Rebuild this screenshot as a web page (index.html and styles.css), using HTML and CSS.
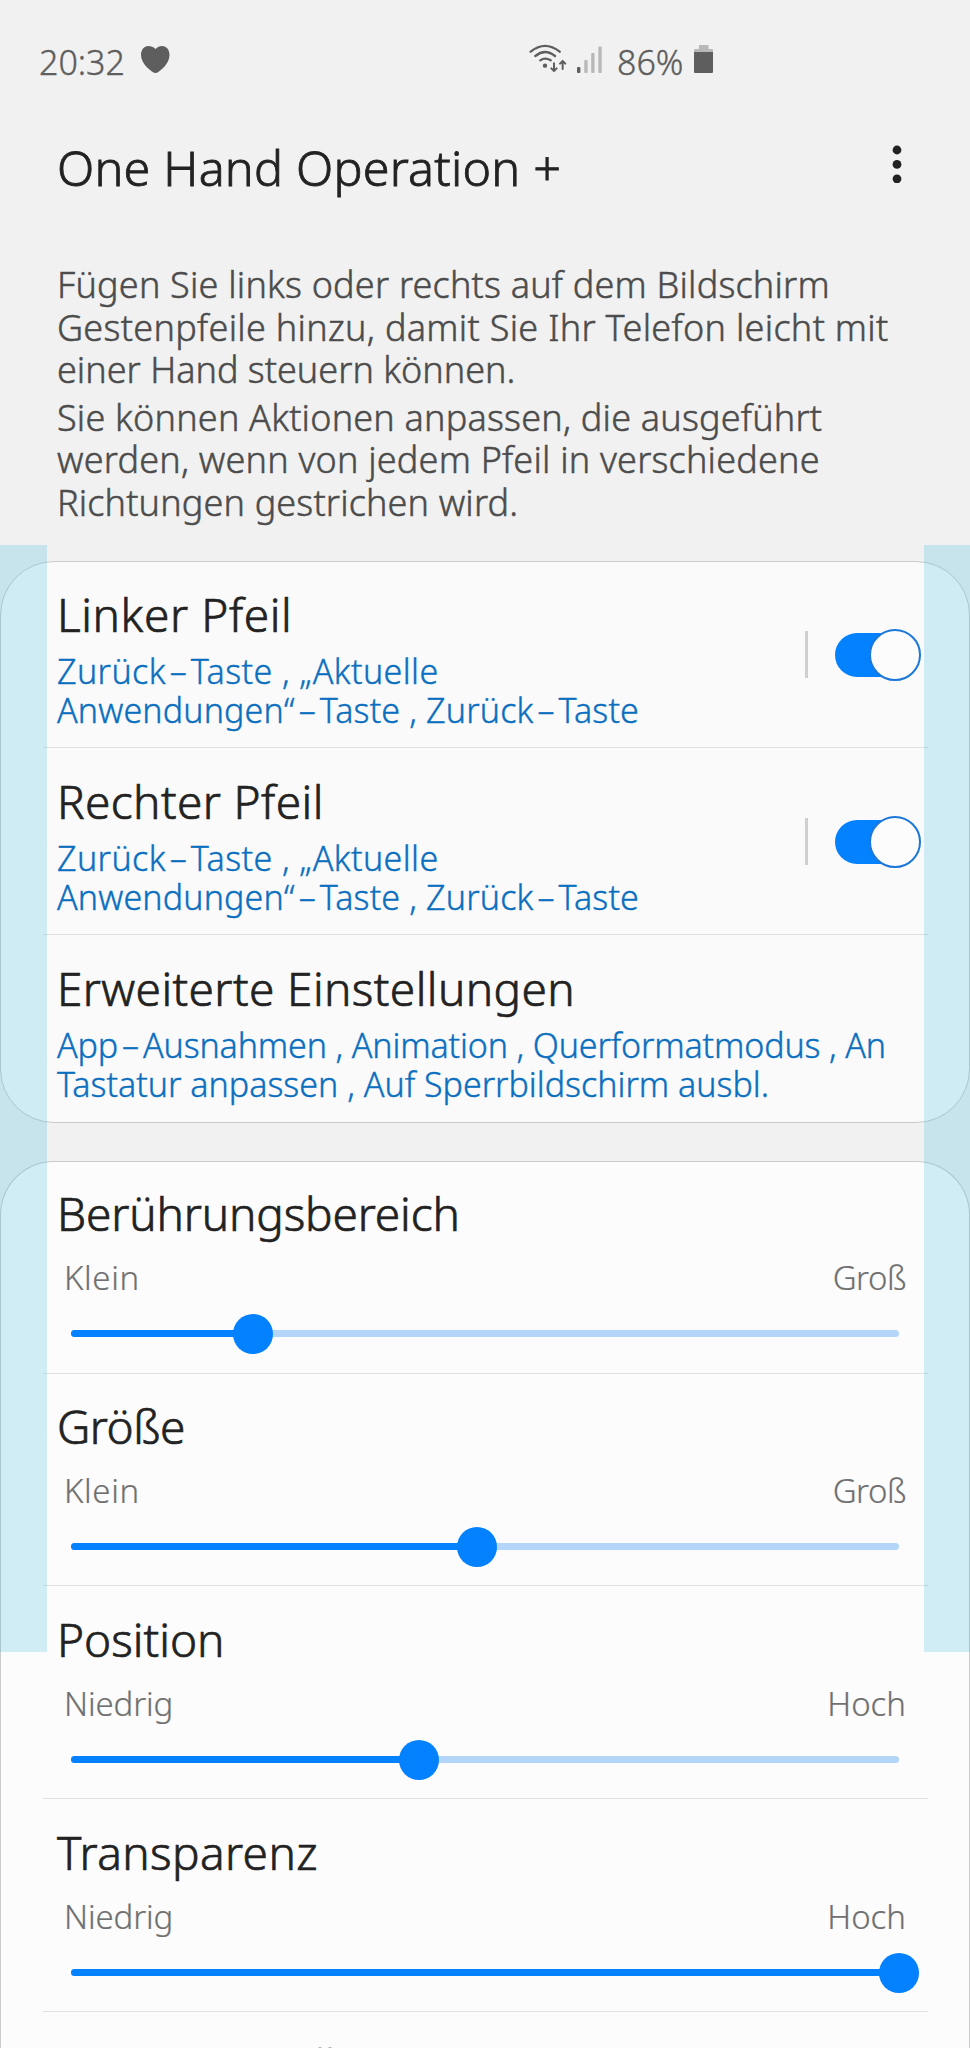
FILE: index.html
```html
<!DOCTYPE html>
<html lang="de">
<head>
<meta charset="utf-8">
<title>One Hand Operation +</title>
<link rel="stylesheet" href="styles.css">
</head>
<body>
<div class="screen">
  <div class="status">
    <span class="time">20:32</span>
    <svg class="heart" viewBox="0 0 29 27"><path d="M14.5 3C12.300.8 9.800 0 7.500 0 3 0 0 3.800 0 9c0 8.500 9 15.500 12.500 17.500 1.400.7 2.700.7 4 0C20 24.500 28.500 17.500 28.500 9c0-5.200-3-9-7.500-9-2.500 0-4.500 1-6.500 3z"/></svg>
    <svg class="wifi" viewBox="0 0 129 90">
      <g fill="none" stroke="#5e5e5e" stroke-width="7" stroke-linecap="round" stroke-linejoin="round">
        <path d="M17 26Q60-9 104 26M31 39Q60 15 90 39M46 52Q60 42 77 52"/>
        <path d="M87 61v23M79 76l8 8 8-8M113 78V54M105 62l8-8 8 8" stroke-width="6"/>
      </g>
      <circle cx="60" cy="68" r="6.500" fill="#5e5e5e"/>
    </svg>
    <svg class="bars" viewBox="0 0 26 27"><rect x="0" y="21" width="3.400" height="6" rx="1" fill="#5e5e5e"/><g fill="#b8b8b8"><rect x="7.300" y="14" width="3.300" height="13" rx="1"/><rect x="14.200" y="7" width="3.300" height="20" rx="1"/><rect x="21.400" y="0.500" width="3.300" height="26.500" rx="1"/></g></svg>
    <span class="percent">86%</span>
    <svg class="battery" viewBox="0 0 19 29"><path d="M5 1h9.500v4H18q1 0 1 1v3H0V6q0-1 1-1h4z" fill="#b8b8b8"/><path d="M0 8h19v20q0 1-1 1H1q-1 0-1-1z" fill="#5e5e5e"/></svg>
  </div>

  <header class="appbar">
    <h1 class="app-title">One Hand Operation +</h1>
    <svg class="menu" viewBox="0 0 10 38"><circle cx="5" cy="5" r="4.400"/><circle cx="5" cy="19.400" r="4.400"/><circle cx="5" cy="33.800" r="4.400"/></svg>
  </header>

  <div class="intro">
    <p><span class="line ls-20">Fügen Sie links oder rechts auf dem Bildschirm</span><span class="line ls-30">Gestenpfeile hinzu, damit Sie Ihr Telefon leicht mit</span><span class="line ls-0">einer Hand steuern können.</span></p>
    <p><span class="line ls-20">Sie können Aktionen anpassen, die ausgeführt</span><span class="line ls-20">werden, wenn von jedem Pfeil in verschiedene</span><span class="line ls-15">Richtungen gestrichen wird.</span></p>
  </div>

  <section class="card arrows">
    <div class="row first">
      <div class="copy">
        <h2 class="ls-60">Linker Pfeil</h2>
        <p><span class="line ls-40">Zurück<i class="dash">–</i>Taste , „Aktuelle</span><span class="line ls-15">Anwendungen“<i class="dash">–</i>Taste , Zurück<i class="dash">–</i>Taste</span></p>
      </div>
      <span class="divider"></span>
      <span class="switch"><span class="knob"></span></span>
    </div>
    <div class="row middle">
      <div class="copy">
        <h2 class="ls-40">Rechter Pfeil</h2>
        <p><span class="line ls-40">Zurück<i class="dash">–</i>Taste , „Aktuelle</span><span class="line ls-15">Anwendungen“<i class="dash">–</i>Taste , Zurück<i class="dash">–</i>Taste</span></p>
      </div>
      <span class="divider"></span>
      <span class="switch"><span class="knob"></span></span>
    </div>
    <div class="row last">
      <div class="copy">
        <h2 class="ls-40">Erweiterte Einstellungen</h2>
        <p><span class="line ls-neg">App<i class="dash">–</i>Ausnahmen , Animation , Querformatmodus , An</span><span class="line ls-0">Tastatur anpassen , Auf Sperrbildschirm ausbl.</span></p>
      </div>
    </div>
  </section>

  <section class="card sliders">
    <div class="setting first">
      <h2 class="ls-neg">Berührungsbereich</h2>
      <div class="labels"><span class="ls-60">Klein</span><span class="ls-tight">Groß</span></div>
      <div class="slider"><div class="fill" style="width:22%"></div><div class="thumb"></div></div>
    </div>
    <div class="setting second">
      <h2 class="ls-tight">Größe</h2>
      <div class="labels"><span class="ls-60">Klein</span><span class="ls-tight">Groß</span></div>
      <div class="slider"><div class="fill" style="width:49%"></div><div class="thumb"></div></div>
    </div>
    <div class="setting">
      <h2 class="ls-0">Position</h2>
      <div class="labels"><span class="ls-neg">Niedrig</span><span>Hoch</span></div>
      <div class="slider"><div class="fill" style="width:42%"></div><div class="thumb"></div></div>
    </div>
    <div class="setting">
      <h2 class="ls-40">Transparenz</h2>
      <div class="labels"><span class="ls-neg">Niedrig</span><span>Hoch</span></div>
      <div class="slider"><div class="fill" style="width:100%"></div><div class="thumb"></div></div>
    </div>
    <div class="next"><i></i><i></i></div>
  </section>

  <div class="handle left"></div>
  <div class="handle right"></div>
</div>
</body>
</html>
```
FILE: styles.css
```css
* { box-sizing: border-box; }
body { margin: 0; background: #f1f1f1; }
h1, h2, p { margin: 0; font-weight: 300; }
svg { display: block; flex: none; }

.screen {
  position: relative;
  width: 970px;
  height: 2048px;
  overflow: hidden;
  background: #f1f1f1;
  color: #222;
  font-family: "Noto Sans", "Open Sans", sans-serif;
  font-weight: 300;
  white-space: nowrap;
}

/* status bar */
.status {
  display: flex;
  align-items: flex-start;
  height: 86px;
  padding: 38px 0 0 39px;
  font-size: 34px;
  line-height: 48px;
  color: #5e5e5e;
  -webkit-text-stroke: 0.4px #5e5e5e;
}
.time { width: 102px; }
.heart { width: 29px; height: 27px; margin-top: 8px; fill: #5e5e5e; }
.wifi { width: 43px; height: 30px; margin: 5px 0 0 355px; }
.bars { width: 26px; height: 27px; margin: 8px 0 0 9px; }
.percent { width: 77px; margin-left: 14px; }
.battery { width: 19px; height: 29px; margin-top: 6px; }

/* app bar */
.appbar {
  display: flex;
  justify-content: space-between;
  padding: 49px 68px 0 57px;
  height: 113px;
}
.app-title {
  font-size: 48.500px;
  line-height: 64px;
  letter-spacing: 0.2px;
  -webkit-text-stroke: 0.8px #222;
}
.menu { width: 10px; height: 38px; margin-top: 10px; fill: #222; }

.intro {
  display: flex;
  flex-direction: column;
  gap: 5px;
  height: 362px;
  padding: 65px 0 0 57px;
  font-size: 36px;
  line-height: 42.500px;
  color: #4c4c4c;
}
.line { display: block; }
.intro .line { -webkit-text-stroke: 0.5px #4c4c4c; }

/* cards */
.card { border: 1px solid #cbcbcb; border-radius: 54px; }
.arrows { height: 562px; background: #fafafa; }
.sliders {
  height: 960px;
  margin-top: 38px;
  border-bottom: 0;
  border-radius: 54px 54px 0 0;
  background: #fcfcfc;
}
h2 { font-size: 46px; line-height: 60px; -webkit-text-stroke: 0.7px #222; }

.row {
  display: flex;
  align-items: center;
  height: 187px;
  margin: 0 41px 0 42px;
  padding-right: 7px;
  border-bottom: 1px solid #e0e0e0;
}
.row.first { height: 186px; }
.row.middle { padding-top: 1px; }
.row.last { border-bottom: 0; }
.copy { flex: 1; align-self: stretch; padding: 22px 0 0 14px; }
.row.last .copy { padding-top: 23px; }
.copy p { margin-top: 8px; font-size: 34px; line-height: 39px; color: #0b6fbf; }
.copy .line { -webkit-text-stroke: 0.4px #0b6fbf; }
.dash {
  display: inline-block;
  width: 25px;
  font-style: normal;
  letter-spacing: 0;
  text-align: center;
}
.divider { width: 3px; height: 47px; background: #cfcfcf; }
.switch {
  display: flex;
  align-items: center;
  justify-content: flex-end;
  width: 86px;
  height: 44px;
  margin-left: 27px;
  border-radius: 22px;
  background: linear-gradient(90deg, #0381fe 60px, transparent 60px);
}
.knob {
  flex: none;
  width: 52px;
  height: 52px;
  border: 2px solid #1b78d8;
  border-radius: 50%;
  background: #fcfcfc;
}

/* sliders */
.setting {
  height: 213px;
  margin: 0 41px 0 42px;
  padding-top: 22.500px;
  border-bottom: 1px solid #e2e2e2;
}
.setting.first { height: 212px; padding-top: 21px; }
.setting.second { height: 212px; padding-top: 22px; }
.setting h2 { padding-left: 14px; }
.labels {
  display: flex;
  justify-content: space-between;
  margin-top: 13px;
  padding: 0 22px 0 21px;
  font-size: 33px;
  line-height: 44px;
  color: #707070;
  -webkit-text-stroke: 0.2px #707070;
}
.slider {
  display: flex;
  align-items: center;
  width: 828px;
  height: 7px;
  margin: 30.500px 0 0 28px;
  border-radius: 3.500px;
  background: #b2d5f8;
}
.first .slider, .second .slider { margin-top: 30px; }
.fill { flex: none; height: 7px; border-radius: 3.500px; background: #0381fe; }
.thumb {
  flex: none;
  width: 40px;
  height: 40px;
  margin-left: -20px;
  border-radius: 50%;
  background: #0381fe;
}
.next { display: flex; gap: 6px; padding: 35px 0 0 317px; }
.next i { width: 4px; height: 4px; border-radius: 50%; background: #aaa; }

/* gesture areas over both screen edges */
.handle {
  position: absolute;
  top: 545px;
  width: 46.500px;
  height: 1107px;
  background: rgba(35, 178, 222, 0.2);
}
.left { left: 0; }
.right { right: 0; }

/* tracking */
.ls-neg { letter-spacing: -0.14px; }
.ls-0 { letter-spacing: 0; }
.ls-15 { letter-spacing: 0.15px; }
.ls-20 { letter-spacing: 0.2px; }
.ls-30 { letter-spacing: 0.3px; }
.ls-40 { letter-spacing: 0.4px; }
.ls-60 { letter-spacing: 0.6px; }
.ls-tight { letter-spacing: -0.5px; }
```
